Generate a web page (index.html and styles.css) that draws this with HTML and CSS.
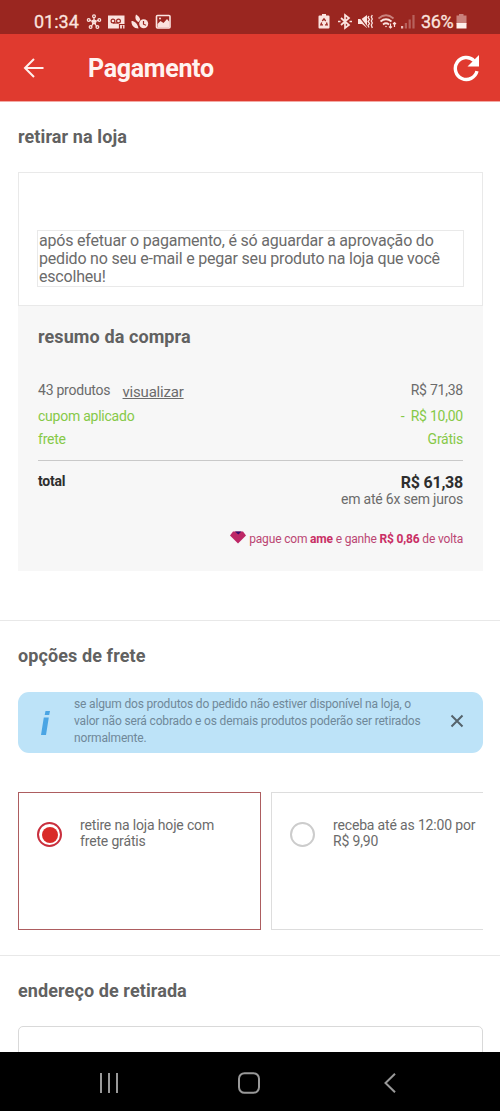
FILE: index.html
```html
<!DOCTYPE html>
<html lang="pt-BR">
<head>
<meta charset="utf-8">
<title>Pagamento</title>
<link rel="stylesheet" href="styles.css">
</head>
<body>
<div class="screen">
  <div class="status">
    <div class="status-left">
      <span class="clock">01:34</span>
      <svg width="16" height="18" viewBox="0 0 16 18" fill="none" stroke="#fbe3df" stroke-width="1.2"><path d="M8 9V4M8 9l5-2M8 9l3 5M8 9l-3 5M8 9L3 7"/><circle cx="8" cy="9" r="1.8"/><circle cx="8" cy="3.3" r="1.4"/><circle cx="13.3" cy="7" r="1.4"/><circle cx="11.4" cy="14" r="1.4"/><circle cx="4.6" cy="14" r="1.4"/><circle cx="2.7" cy="7" r="1.4"/></svg>
      <svg width="17" height="18" viewBox="0 0 17 18"><path fill="#fbe3df" d="M0 2.5h16.500v13H0z"/><g fill="none" stroke="#9c2721" stroke-width="1.200"><circle cx="5" cy="8" r="1.900"/><circle cx="10.500" cy="8" r="1.900"/><path d="M5 10h5.500"/><path d="M11.500 16v-4.500H17M14.500 12.500V16"/></g></svg>
      <svg width="18" height="18" viewBox="0 0 18 18"><path fill="#fbe3df" d="M5 1.500c3 1.500 5 4.500 4 8-4-1-5.500-4-4-8zM.5 8c3 0 6 2 7 7.500C3 15.500 0 12 .5 8z"/><circle cx="12.700" cy="10.800" r="5.200" fill="#9a2620"/><circle cx="12.700" cy="10.800" r="4.500" fill="#fbe3df"/><path d="M12.500 8v3.200l2.500 1" fill="none" stroke="#9c2721" stroke-width="1.200"/></svg>
      <svg width="16" height="18" viewBox="0 0 16 18"><rect x="1.500" y="2.500" width="13.500" height="12.500" rx="1" fill="none" stroke="#fbe3df" stroke-width="1.600"/><path fill="#fbe3df" d="M2.500 14.500v-3.500l3-3 3 2 3.500-4 2.500 3v5.500z"/><circle cx="5" cy="5.600" r="1" fill="#fbe3df"/></svg>
    </div>
    <div class="status-right">
      <svg class="saver" width="12" height="18" viewBox="0 0 12 18"><path fill="#fbe3df" d="M4 1h4v1.500h2.500q1 0 1 1v11q0 1-1 1h-9q-1 0-1-1v-11q0-1 1-1H4z"/><path d="M4.300 8L6 5.800 7.700 8M8.500 9.500l.7 2.300H7M5 11.800H2.800l.9-2.300" fill="none" stroke="#9c2721" stroke-width="1.300"/></svg>
      <svg class="bluetooth" width="14" height="18" viewBox="0 0 14 18" fill="none" stroke="#fbe3df" stroke-width="1.700"><path d="M3 5l8 7-4 3V2l4 3-8 7"/><path d="M0 8.500h2.500M11.500 8.500H14"/></svg>
      <svg width="16" height="18" viewBox="0 0 16 18"><path fill="#fbe3df" d="M0 6h3.500L9 2v13l-5-4H0z"/><path d="M0 2l10 13" stroke="#9a2620" stroke-width="1.200"/><path d="M11 3l-1 1.500 1.500 2-1.500 2 1.500 2-1.500 2 1 2M14.300 2l-1 2 1 2-1 2 1 2-1 2 1 3" fill="none" stroke="#fbe3df" stroke-width="1.300"/></svg>
      <svg width="19" height="18" viewBox="0 0 19 18" fill="none" stroke-width="1.700"><path d="M.5 5.500q7.500-6.500 15 0" stroke="#c9827d"/><path d="M2.500 8.500q5.500-4.500 11 0M5 11.500q3-2.500 6 0" stroke="#fbe3df"/><circle cx="8" cy="13.500" r=".8" fill="#fbe3df" stroke="none"/><path stroke="#fbe3df" stroke-width="1.200" d="M12.500 10.500v4.500M11 13.500l1.500 1.500 1.500-1.500M16.500 14V9.500M15 11l1.500-1.500L18 11"/></svg>
      <svg width="14" height="18" viewBox="0 0 14 18"><path fill="#e8bdb9" d="M0 13h2.200v2.500H0z"/><path fill="#b7625d" d="M3.800 10H6v5.500H3.800zM7.600 6.500h2.200v9H7.600zM11.400 2h2.200v13.500h-2.200z"/></svg>
      <span class="percent">36%</span>
      <svg width="11" height="18" viewBox="0 0 11 18"><path fill="#c9807b" d="M3 1h4.500v1.500h3V11H.5V2.500H3z"/><path fill="#fff0ed" d="M.5 10h10v5.500H.5z"/></svg>
    </div>
  </div>
  <header class="bar">
    <svg width="22" height="22" viewBox="0 0 22 22" fill="none" stroke="#fff0ed" stroke-width="2"><path d="M20.500 11H2.500M11 2L2 11l9 9"/></svg>
    <h1>Pagamento</h1>
    <svg width="28" height="28" viewBox="0 0 28 28"><path d="M22 6.600A11 11 0 1 0 25 17.200" fill="none" stroke="#fff" stroke-width="3.400"/><path fill="#fff" d="M27 1v11.500H15.500z"/></svg>
  </header>
  <main>
    <section class="store">
      <h2>retirar na loja</h2>
      <div class="notice"><p>após efetuar o pagamento, é só aguardar a aprovação do<br>pedido no seu e-mail e pegar seu produto na loja que você<br>escolheu!</p></div>
      <div class="summary">
        <h2>resumo da compra</h2>
        <div class="row products"><span>43 produtos <a>visualizar</a></span><span>R$ 71,38</span></div>
        <div class="row green"><span>cupom aplicado</span><span>-&nbsp; R$ 10,00</span></div>
        <div class="row green"><span>frete</span><span>Grátis</span></div>
        <div class="row total"><b>total</b><b class="sum">R$ 61,38</b></div>
        <div class="installments">em até 6x sem juros</div>
        <div class="ame"><svg width="16" height="13" viewBox="0 0 16 13"><path fill="#bd2766" d="M3 .5h10l3 4L8 12.500 0 4.500z"/><path fill="#32106e" d="M5 .5h6.500L8.300 3.500z"/></svg><span>pague com <b>ame</b> e ganhe <b>R$ 0,86</b> de volta</span></div>
      </div>
    </section>
    <section class="shipping">
      <h2>opções de frete</h2>
      <div class="info">
        <svg width="12" height="26" viewBox="0 0 12 26"><path fill="#4aa5e4" d="M5.500 1h4.500l-.8 4H4.700zM3.800 7.500h5L6 25H1z"/></svg>
        <p>se algum dos produtos do pedido não estiver disponível na loja, o<br>valor não será cobrado e os demais produtos poderão ser retirados<br>normalmente.</p>
        <svg class="close" width="14" height="14" viewBox="0 0 14 14" stroke="#55636c" stroke-width="2"><path d="M1.500 1.500l11 11M12.500 1.500l-11 11"/></svg>
      </div>
      <div class="options">
        <div class="option selected"><span class="radio"></span><p>retire na loja hoje com<br>frete grátis</p></div>
        <div class="option"><span class="radio"></span><p>receba até as 12:00 por<br>R$ 9,90</p></div>
      </div>
    </section>
    <section class="address">
      <h2>endereço de retirada</h2>
      <div class="address-box"></div>
    </section>
  </main>
  <nav>
    <svg width="20" height="20" viewBox="0 0 20 20" stroke="#999" stroke-width="2"><path d="M2 0v20M10 0v20M18 0v20"/></svg>
    <svg class="home" width="22" height="22" viewBox="0 0 22 22"><rect x="1" y="1.200" width="20" height="19.600" rx="5.500" fill="none" stroke="#999" stroke-width="2"/></svg>
    <svg width="12" height="20" viewBox="0 0 12 20" fill="none" stroke="#999" stroke-width="2"><path d="M11 .7L1.500 10l9.500 9.300"/></svg>
  </nav>
</div>
</body>
</html>
```
FILE: styles.css
```css
* { box-sizing: border-box; }
body, h1, h2, p { margin: 0; }
body { font-family: Roboto, sans-serif; color: #6b6b6b; background: #fff; }
svg { display: block; flex: none; }
.screen { width: 500px; height: 1111px; display: flex; flex-direction: column; overflow: hidden; white-space: nowrap; }
.status { height: 34px; flex: none; background: #9a2620; display: flex; justify-content: space-between; padding: 9px 33px 0 34px; color: #fbe3df; font-size: 18px; line-height: 25px; -webkit-text-stroke: .3px; }
.status-left, .status-right { display: flex; align-items: center; height: 25px; }
.status-left { gap: 6px; }
.status-right { gap: 4px; }
.saver { margin-right: 4px; }
.bluetooth { margin-right: 2px; }
.clock { width: 46px; }
.percent { width: 33px; margin: 0 -2px 0 2px; letter-spacing: -.4px; }
.bar { height: 68px; flex: none; background: #e03a2f; border-bottom: 1px solid #f3aaa5; display: flex; align-items: center; padding: 0 20px 0 23px; color: #fff3f0; }
.bar h1 { flex: 1; margin-left: 43px; padding-top: 3px; font-size: 25px; font-weight: 700; line-height: 30px; letter-spacing: -.3px; }
main { flex: 1; min-height: 0; overflow: hidden; }
section { padding: 0 17px 0 18px; }
h2 { font-size: 18px; line-height: 24px; font-weight: 700; letter-spacing: .1px; color: #616161; }
.store { height: 518px; padding-top: 23px; }
.notice { margin-top: 23px; height: 134px; border: 1px solid #e9e9e9; padding: 57px 18px 0; }
.notice p { height: 57px; border: 1px solid #e9e9e9; padding: 1px 0 0 1px; font-size: 16px; letter-spacing: -.2px; line-height: 18px; }
.summary { height: 265px; background: #f7f7f7; padding: 19px 20px 0; font-size: 14px; }
.row { display: flex; justify-content: space-between; line-height: 23px; letter-spacing: -.24px; }
.products { margin-top: 30px; height: 26px; }
.products a { margin-left: 9px; font-size: 15px; letter-spacing: -.2px; text-decoration: underline; position: relative; top: 2px; }
.green { color: #86c947; }
.total { margin-top: 9px; border-top: 1px solid #c9c9c9; padding-top: 10px; color: #2e2e2e; line-height: 20px; }
.sum { font-size: 16px; line-height: 23px; }
.installments { text-align: right; letter-spacing: -.2px; line-height: 14px; margin-top: -2px; }
.ame { display: flex; justify-content: flex-end; align-items: center; gap: 3px; margin-top: 25px; font-size: 12px; letter-spacing: -.17px; line-height: 16px; color: #bb4673; }
.ame svg { margin-top: -4px; }
.ame b { color: #c92f65; }
.shipping { height: 335px; border-top: 1px solid #e8e8e8; padding-top: 23px; }
.info { display: flex; align-items: center; height: 61px; margin-top: 24px; background: #bde3f8; border-radius: 11px; padding: 0 19px 0 22px; color: #708898; font-size: 12px; letter-spacing: -.16px; line-height: 17px; }
.info p { flex: 1; margin: -2px 0 0 22px; }
.close { margin-top: -4px; }
.options { display: flex; gap: 10px; margin-top: 39px; overflow: hidden; }
.option { flex: none; width: 243px; height: 138px; border: 1px solid #ddd; display: flex; padding: 24px 0 0 18px; letter-spacing: -.16px; font-size: 14px; line-height: 16px; }
.selected { border-color: #ad5d60; }
.radio { width: 25px; height: 25px; border: 2px solid #ccc; border-radius: 50%; margin: 5px 18px 0 0; flex: none; }
.selected .radio { border-color: #c92f3d; padding: 2.500px; background: #d92b28 content-box; }
.address { border-top: 1px solid #e8e8e8; padding-top: 23px; }
.address-box { height: 100px; margin-top: 23px; border: 1px solid #d9d9d9; border-radius: 5px; }
nav { height: 59px; flex: none; background: #000; display: flex; align-items: center; justify-content: space-between; padding: 3px 104px 0 99px; }
.home { margin-right: 5px; }
```
